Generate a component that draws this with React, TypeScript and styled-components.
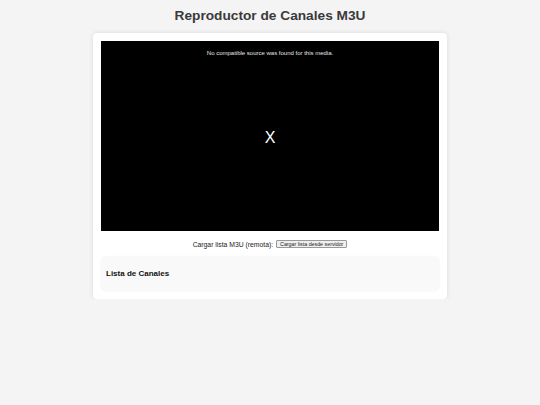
import React from "react";
import styled, { createGlobalStyle } from "styled-components";

const GlobalStyle = createGlobalStyle`
   html, body {
      margin: 0;
      padding: 0;
      background-color: #f4f4f4;
      font-family: "Liberation Sans", Arial, sans-serif;
   }
`;

const Page = styled.main`
   padding-top: 8px;
`;

const Title = styled.h1`
   margin: 0 0 9px;
   font-size: 13.7px;
   line-height: 16px;
   font-weight: 700;
   text-align: center;
   color: #3a3a3a;
`;

const Card = styled.section`
   width: 338px;
   margin: 0 auto;
   padding: 8px;
   border-radius: 4px;
   background-color: #fff;
   box-shadow: 0 0 5px rgba(0, 0, 0, 0.1);
`;

const VideoBox = styled.div`
   position: relative;
   width: 338px;
   height: 190px;
   background-color: #000;
   display: flex;
   align-items: center;
   justify-content: center;
`;

const ErrorMessage = styled.p`
   position: absolute;
   top: 9px;
   left: 0;
   right: 0;
   margin: 0;
   font-size: 6px;
   line-height: 7px;
   text-align: center;
   color: #e6e6e6;
`;

const CloseMark = styled.span`
   font-size: 16px;
   line-height: 16px;
   color: #fff;
   margin-top: 3px;
`;

const Controls = styled.div`
   display: flex;
   align-items: center;
   justify-content: center;
   gap: 3px;
   margin-top: 9px;
   height: 8px;
   font-size: 6.8px;
   color: #222;
`;

const LoadButton = styled.button`
   height: 8px;
   padding: 0 3px;
   font-family: "Liberation Sans", Arial, sans-serif;
   font-size: 5.3px;
   line-height: 6px;
   color: #222;
   background-color: #efefef;
   border: 1px solid #999;
   border-radius: 1px;
`;

const ChannelPanel = styled.div`
   margin-top: 9px;
   padding: 9px 5px;
   border-radius: 5px;
   background-color: #f9f9f9;
   box-shadow: 0 0 3px rgba(0, 0, 0, 0.06);
`;

const PanelTitle = styled.h3`
   margin: 0;
   font-size: 8px;
   line-height: 16px;
   font-weight: 700;
   color: #111;
`;

function App() {
   return (
      <>
         <GlobalStyle />
         <Page>
            <Title>Reproductor de Canales M3U</Title>
            <Card>
               <VideoBox>
                  <ErrorMessage>No compatible source was found for this media.</ErrorMessage>
                  <CloseMark>X</CloseMark>
               </VideoBox>
               <Controls>
                  <span>Cargar lista M3U (remota):</span>
                  <LoadButton type="button">Cargar lista desde servidor</LoadButton>
               </Controls>
               <ChannelPanel>
                  <PanelTitle>Lista de Canales</PanelTitle>
               </ChannelPanel>
            </Card>
         </Page>
      </>
   );
}

export default App;
